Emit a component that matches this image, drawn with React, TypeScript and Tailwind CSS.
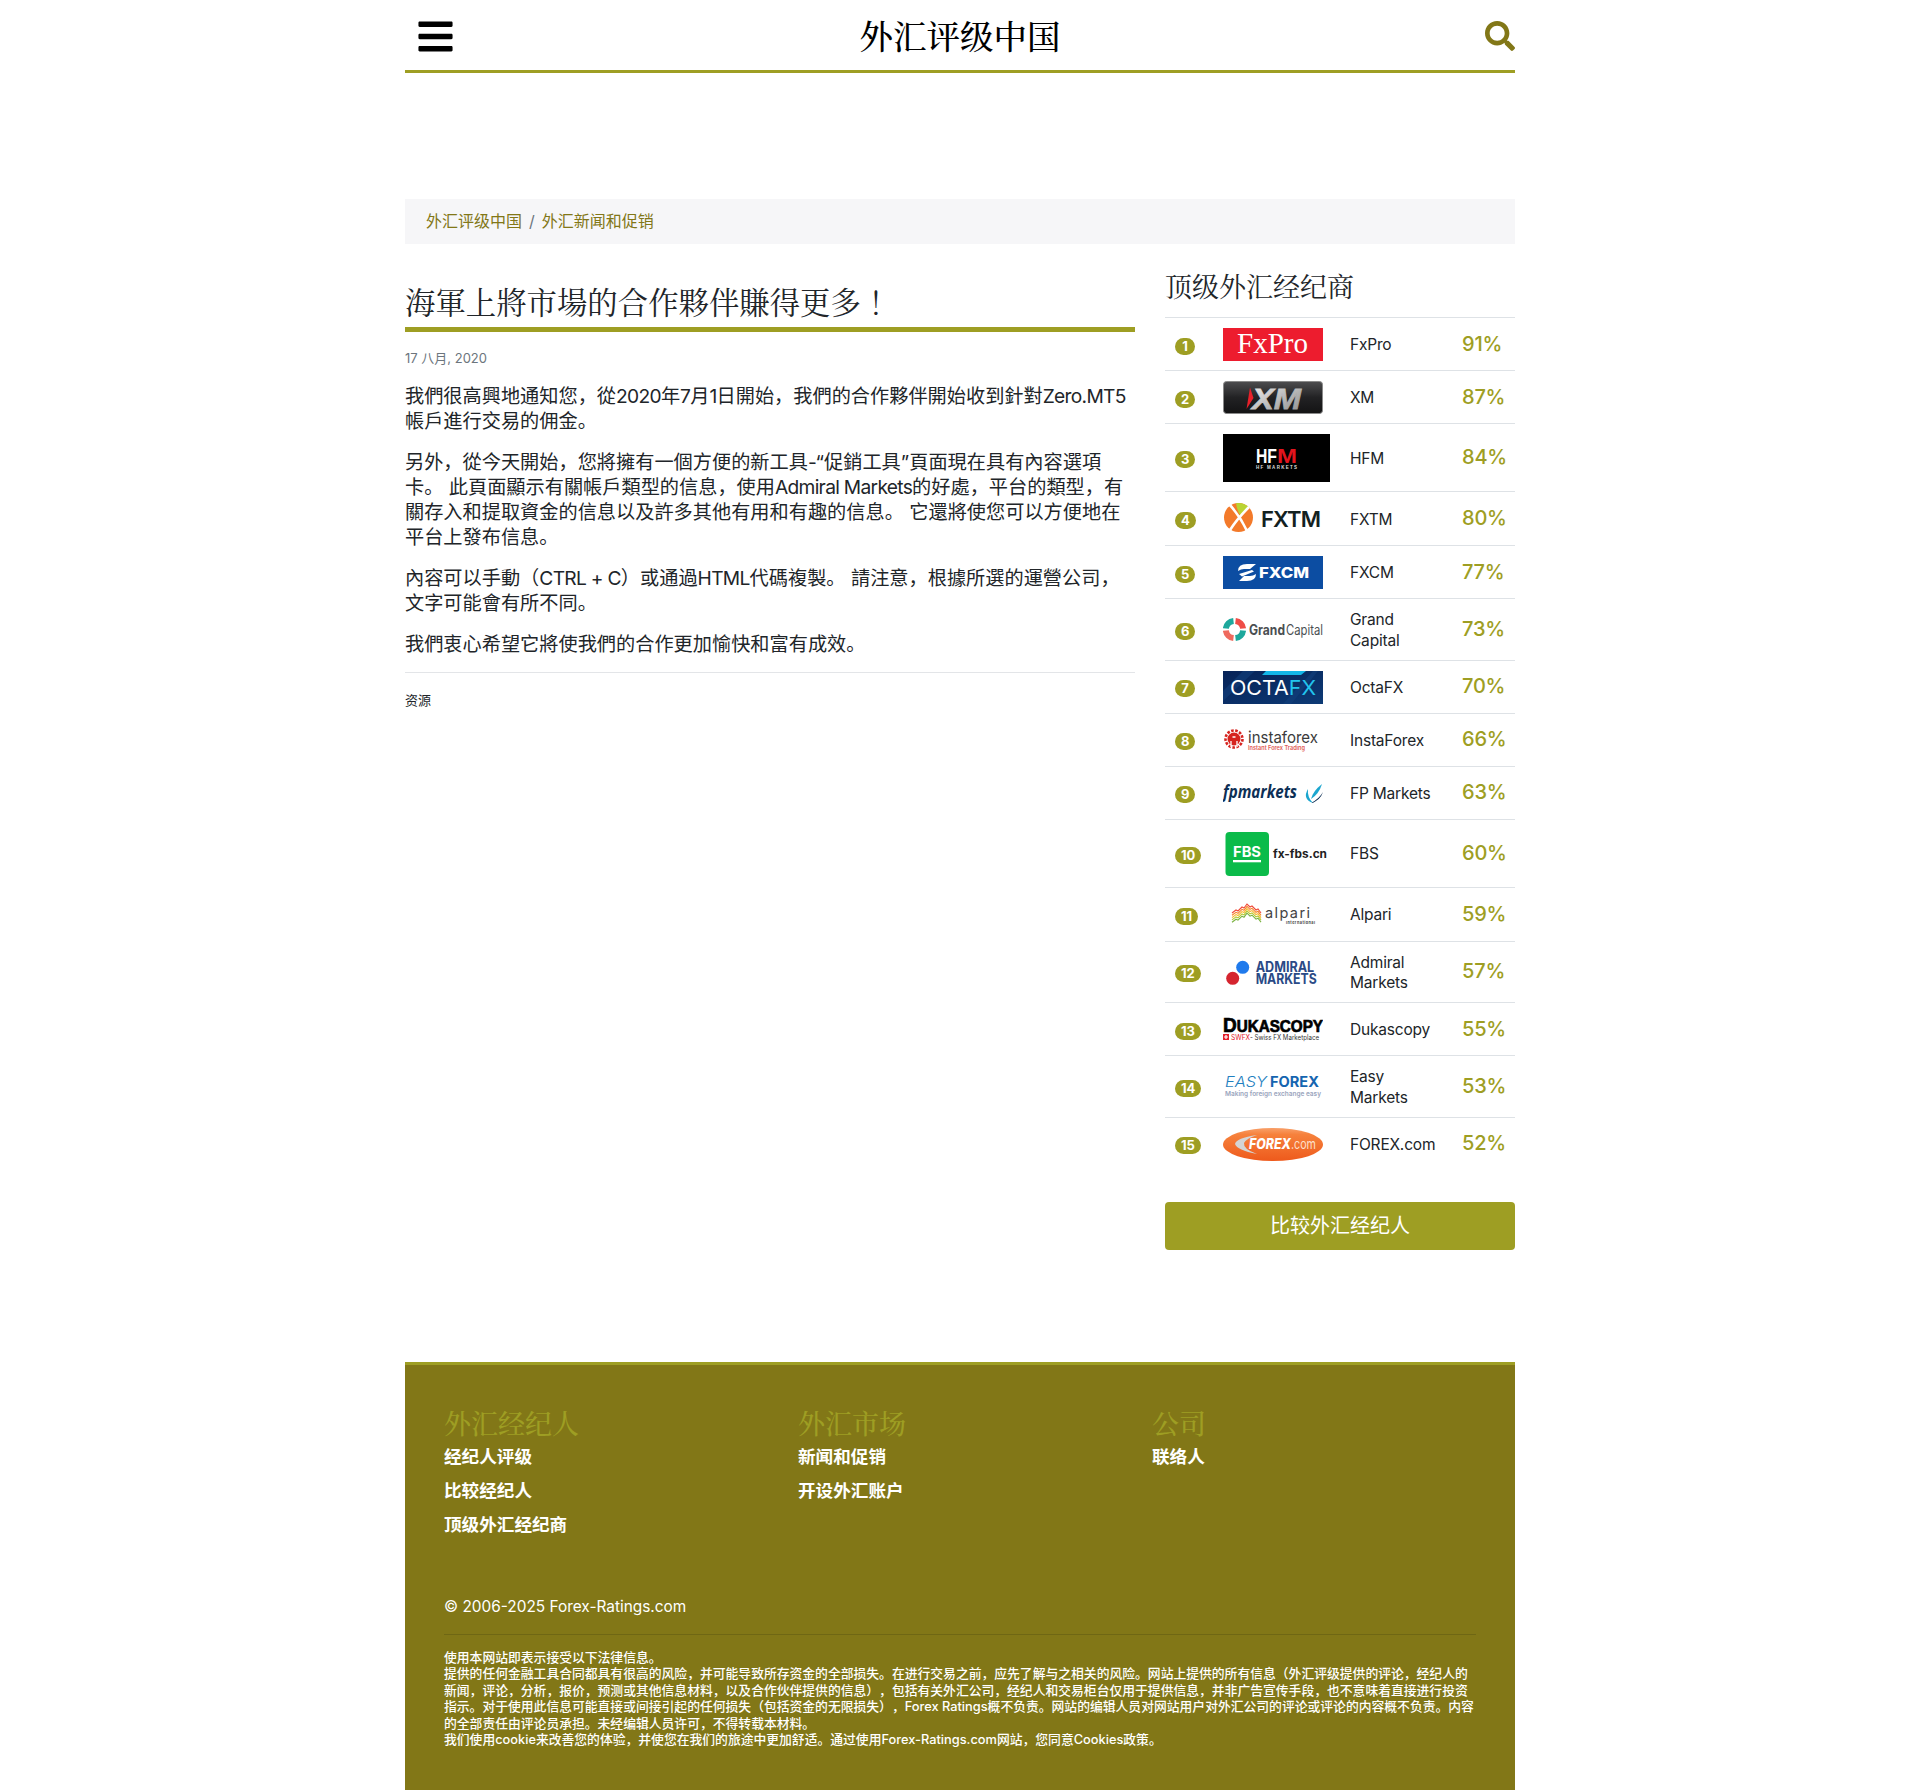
import React from "react";
import { FaBars, FaSearch } from "react-icons/fa";

const SC = "font-['Inter','Noto_Sans_CJK_SC',sans-serif]";
const ST = "font-['Noto_Serif_CJK_SC','Liberation_Serif','Noto_Sans_CJK_SC',serif]";
const TT = "font-['Noto_Serif_CJK_TC','Noto_Serif_CJK_SC','Liberation_Serif',serif]";

const inter = "Inter, sans-serif";
const arial = "'Liberation Sans', sans-serif";
const serif = "'Liberation Serif', serif";

function Svg({ w = 100, h = 33, children }: { w?: number; h?: number; children: React.ReactNode }) {
  return (
    <svg width={w} height={h} viewBox={`0 0 ${w} ${h}`} className="block">
      {children}
    </svg>
  );
}

function L({ children }: { children: React.ReactNode }) {
  return <span className="tracking-[-0.7px]">{children}</span>;
}

const FxPro = () => (
  <Svg>
    <rect width="100" height="33" fill="#ed1c2e" />
    <text x="14" y="25" fontFamily={serif} fontSize="29" fill="#fff" textLength="71" lengthAdjust="spacingAndGlyphs">FxPro</text>
  </Svg>
);
const XM = () => (
  <Svg>
    <defs>
      <linearGradient id="xmb" x1="0" y1="0" x2="0" y2="1">
        <stop offset="0" stopColor="#4d4d4f" />
        <stop offset="0.5" stopColor="#222224" />
        <stop offset="1" stopColor="#131314" />
      </linearGradient>
      <linearGradient id="xmt" x1="0" y1="0" x2="1" y2="1">
        <stop offset="0" stopColor="#f4f4f4" />
        <stop offset="1" stopColor="#8a8a8a" />
      </linearGradient>
    </defs>
    <rect x="0.5" y="0.5" width="99" height="32" rx="3" fill="url(#xmb)" stroke="#8a8a8a" />
    <path d="M27 6.5 L30.5 17 L23.5 28 Z" fill="#e8202a" />
    <text x="29" y="28" fontFamily={arial} fontWeight="700" fontStyle="italic" fontSize="30" fill="url(#xmt)" stroke="url(#xmt)" strokeWidth="0.8" textLength="49" lengthAdjust="spacingAndGlyphs">XM</text>
  </Svg>
);
const HFM = () => (
  <Svg w={107} h={48}>
    <rect width="107" height="48" fill="#000" />
    <text x="33" y="29" fontFamily={arial} fontWeight="700" fontSize="20" fill="#fff" textLength="21" lengthAdjust="spacingAndGlyphs">HF</text>
    <text x="54" y="29" fontFamily={arial} fontWeight="700" fontSize="20" fill="#e3141d" textLength="20" lengthAdjust="spacingAndGlyphs">M</text>
    <text x="33" y="35" fontFamily={arial} fontWeight="700" fontSize="4.5" fill="#ddd" textLength="41">HF MARKETS</text>
  </Svg>
);
const FXTM = () => (
  <Svg h={34}>
    <circle cx="15.5" cy="15.5" r="14.5" fill="#f37a2a" />
    <path d="M13 1.2 A14.5 14.5 0 0 1 26 5.5 L17 13 Q14 8 13 1.2 Z" fill="#b9d433" />
    <path d="M6 2 Q17 14 24 29 M26 5 Q14 17 7 28" stroke="#fff" strokeWidth="2.6" fill="none" />
    <text x="38" y="25" fontFamily={inter} fontWeight="600" fontSize="22" fill="#13211f" textLength="60">FXTM</text>
  </Svg>
);
const FXCM = () => (
  <Svg>
    <rect width="100" height="33" fill="#0c4da2" />
    <path d="M15 15 Q15 8 24 8 H33 L27 13 H21 Q18 13 15 15 Z" fill="#fff" />
    <path d="M33 18 Q33 25 24 25 H16 L21 20 H27 Q30 20 33 18 Z" fill="#fff" />
    <path d="M16 18 L29 14 L31 15.5 L19 20.5 Z" fill="#fff" />
    <text x="36" y="21.5" fontFamily={inter} fontWeight="800" fontSize="14.5" fill="#fff" textLength="50" lengthAdjust="spacingAndGlyphs">FXCM</text>
  </Svg>
);
const Grand = () => (
  <Svg>
    <g fill="none" strokeWidth="6">
      <path d="M2.9 15.5 A8.6 8.6 0 0 1 10.5 7.9" stroke="#1da89c" />
      <path d="M12.5 7.9 A8.6 8.6 0 0 1 20.1 15.5" stroke="#ef4d47" />
      <path d="M20.1 17.5 A8.6 8.6 0 0 1 12.5 25.1" stroke="#1da89c" />
      <path d="M10.5 25.1 A8.6 8.6 0 0 1 2.9 17.5" stroke="#ef6a5e" />
    </g>
    <text x="26" y="22" fontFamily={inter} fontSize="14" fontWeight="700" fill="#4a4f52" textLength="36" lengthAdjust="spacingAndGlyphs">Grand</text>
    <text x="63" y="22" fontFamily={inter} fontSize="14" fontWeight="400" fill="#4a4f52" textLength="37" lengthAdjust="spacingAndGlyphs">Capital</text>
  </Svg>
);
const Octa = () => (
  <Svg>
    <defs>
      <linearGradient id="oc" x1="0" y1="0" x2="1" y2="1">
        <stop offset="0" stopColor="#062257" />
        <stop offset="1" stopColor="#0d3a75" />
      </linearGradient>
    </defs>
    <rect width="100" height="33" fill="url(#oc)" />
    <path d="M0 20 L20 0 H32 L0 30 Z M60 33 L90 0 H95 L68 33 Z" fill="#123f7c" opacity="0.6" />
    <path d="M43 0 H83 L78 4 H39 Z" fill="#13b6e8" />
    <text x="7" y="24" fontFamily={inter} fontWeight="400" fontSize="20.5" fill="#fff" textLength="86" lengthAdjust="spacingAndGlyphs">
      OCTA<tspan fill="#22c4ee">FX</tspan>
    </text>
  </Svg>
);
const Insta = () => (
  <Svg>
    <circle cx="11" cy="15" r="8.5" fill="none" stroke="#d6241f" strokeWidth="2.6" strokeDasharray="2.6 1.5" />
    <circle cx="11" cy="15" r="6.5" fill="#d6241f" />
    <path d="M8 23 V17 M14 23 V17 M9.5 13 H12.5" stroke="#fff" strokeWidth="1.3" fill="none" />
    <text x="25" y="18.5" fontFamily={inter} fontSize="16.5" fill="#3b3b3b" textLength="70" lengthAdjust="spacingAndGlyphs">instaforex</text>
    <text x="25" y="25.5" fontFamily={inter} fontSize="6" fontWeight="600" fill="#e05a55" textLength="57" lengthAdjust="spacingAndGlyphs">Instant Forex Trading</text>
  </Svg>
);
const Fp = () => (
  <Svg>
    <text x="0" y="21" fontFamily="'Open Sans', sans-serif" fontWeight="700" fontStyle="italic" fontSize="18" fill="#0d2f55" textLength="74" lengthAdjust="spacingAndGlyphs">fpmarkets</text>
    <path d="M85 12 Q79 22 90 26 Q84 20 85 12 Z" fill="#1ba6cf" />
    <path d="M99 7 Q96 17 88 22 Q90 14 99 7 Z" fill="#1ba6cf" />
    <path d="M100 15 Q97 24 88 26 Q96 22 100 15 Z" fill="#0d2f55" />
  </Svg>
);
const FBS = () => (
  <Svg w={107} h={48}>
    <rect x="2.5" y="2" width="43.5" height="44" rx="4" fill="#0bbb4a" />
    <text x="10" y="27" fontFamily={inter} fontWeight="700" fontSize="14" fill="#fff" textLength="28" lengthAdjust="spacingAndGlyphs">FBS</text>
    <rect x="10" y="30" width="28" height="2.3" fill="#fff" />
    <text x="50" y="28" fontFamily={inter} fontWeight="700" fontSize="11.5" fill="#222" textLength="54" lengthAdjust="spacingAndGlyphs">fx-fbs.cn</text>
  </Svg>
);
const zig = "M9 15 L13 12 L15 13 L19 9 L21 10 L24 6 L27 9 L29 8 L33 12 L35 11 L38 15";
const Alpari = () => (
  <Svg h={34}>
    <g fill="none" strokeWidth="1.1">
      <path d={zig} stroke="#ef4b3a" />
      <path d={zig} stroke="#f5852b" transform="translate(0 2.3)" />
      <path d={zig} stroke="#f7b52b" transform="translate(0 4.6)" />
      <path d={zig} stroke="#b7c92f" transform="translate(0 6.9)" />
      <path d={zig} stroke="#7cb342" transform="translate(0 9.2)" />
    </g>
    <text x="42" y="20" fontFamily={inter} fontSize="14.5" fill="#444" textLength="45">alpari</text>
    <text x="63" y="26" fontFamily={inter} fontSize="3.8" fontWeight="700" fill="#444" textLength="29">International</text>
  </Svg>
);
const Admiral = () => (
  <Svg>
    <circle cx="19.7" cy="11.3" r="6.5" fill="#1f7aec" />
    <circle cx="9.7" cy="22.3" r="6.5" fill="#d5252f" />
    <text x="32.7" y="15.5" fontFamily={inter} fontWeight="700" fontSize="14" fill="#2a4a86" textLength="58.5" lengthAdjust="spacingAndGlyphs">ADMIRAL</text>
    <text x="32.7" y="28" fontFamily={inter} fontWeight="700" fontSize="14" fill="#2a4a86" textLength="61" lengthAdjust="spacingAndGlyphs">MARKETS</text>
  </Svg>
);
const Duka = () => (
  <Svg>
    <text x="0" y="19" fontFamily={arial} fontWeight="700" fontSize="20" fill="#000" stroke="#000" strokeWidth="0.7" textLength="100" lengthAdjust="spacingAndGlyphs">
      D<tspan fontSize="16">UKASCOPY</tspan>
    </text>
    <rect x="0" y="21" width="6" height="6" fill="#e3202a" />
    <path d="M3 22 V26 M1 24 H5" stroke="#fff" strokeWidth="1.2" />
    <text x="8" y="27" fontFamily={inter} fontSize="7" fill="#e3202a" textLength="19" lengthAdjust="spacingAndGlyphs">SWFX</text>
    <text x="27" y="27" fontFamily={inter} fontSize="7" fill="#333" textLength="69" lengthAdjust="spacingAndGlyphs">- Swiss FX Marketplace</text>
  </Svg>
);
const Easy = () => (
  <Svg>
    <text x="2" y="17" fontFamily={inter} fontStyle="italic" fontWeight="300" fontSize="14" fill="#1f7fc0" textLength="42" lengthAdjust="spacingAndGlyphs">EASY</text>
    <text x="47" y="17" fontFamily={inter} fontWeight="700" fontSize="14" fill="#1565b0" textLength="49" lengthAdjust="spacingAndGlyphs">FOREX</text>
    <text x="2" y="26" fontFamily={inter} fontWeight="600" fontSize="6.8" fill="#9aa5bd" textLength="96" lengthAdjust="spacingAndGlyphs">Making foreign exchange easy</text>
  </Svg>
);
const ForexCom = () => (
  <Svg>
    <defs>
      <linearGradient id="fc" x1="0" y1="0" x2="0" y2="1">
        <stop offset="0" stopColor="#f8a06a" />
        <stop offset="0.2" stopColor="#f6813c" />
        <stop offset="1" stopColor="#ee5a1c" />
      </linearGradient>
    </defs>
    <ellipse cx="50" cy="16.5" rx="50" ry="16.5" fill="url(#fc)" />
    <path d="M34 7 Q13 10 12 16 Q14 22 34 26 Q20 21 21 15 Q24 10 34 7 Z" fill="#d4d4d4" />
    <text x="26" y="21" fontFamily={inter} fontWeight="800" fontStyle="italic" fontSize="14" fill="#fff" textLength="42" lengthAdjust="spacingAndGlyphs">FOREX</text>
    <text x="68" y="21" fontFamily={inter} fontWeight="400" fontSize="14" fill="#fde0cc" textLength="25" lengthAdjust="spacingAndGlyphs">.com</text>
  </Svg>
);

const rows: [string, string, React.ComponentType][] = [
  ["FxPro", "91%", FxPro],
  ["XM", "87%", XM],
  ["HFM", "84%", HFM],
  ["FXTM", "80%", FXTM],
  ["FXCM", "77%", FXCM],
  ["Grand Capital", "73%", Grand],
  ["OctaFX", "70%", Octa],
  ["InstaForex", "66%", Insta],
  ["FP Markets", "63%", Fp],
  ["FBS", "60%", FBS],
  ["Alpari", "59%", Alpari],
  ["Admiral Markets", "57%", Admiral],
  ["Dukascopy", "55%", Duka],
  ["Easy Markets", "53%", Easy],
  ["FOREX.com", "52%", ForexCom],
];

function BrokerRow({ n, name, pct, Logo }: { n: number; name: string; pct: string; Logo: React.ComponentType }) {
  return (
    <div className="flex items-center border-t border-[#dee2e6] pt-[10px] pb-[9px]">
      <div className="w-[58px] pl-[10px] shrink-0">
        <span className="inline-block min-w-[20px] rounded-full bg-[#9e9e23] px-[6px] text-center text-[13px] font-bold leading-[17px] text-white">{n}</span>
      </div>
      <div className="w-[127px] shrink-0"><Logo /></div>
      <div className="w-[112px] shrink-0 translate-y-[1px] pr-[20px] text-[15.5px] leading-[20.8px] tracking-[-0.2px] text-[#212529]">{name}</div>
      <div className="-translate-y-[1px] text-[20px] font-medium leading-[24px] tracking-[-0.2px] text-[#9e9e23]">{pct}</div>
    </div>
  );
}

const foot = [
  ["外汇经纪人", ["经纪人评级", "比较经纪人", "顶级外汇经纪商"]],
  ["外汇市场", ["新闻和促销", "开设外汇账户"]],
  ["公司", ["联络人"]],
] as const;

export default function App() {
  return (
    <div className={`mx-auto w-[1110px] ${SC} text-[#212529] [text-spacing-trim:space-all]`}>
      <header className="grid h-[73px] grid-cols-[1fr_auto_1fr] items-center border-b-[3px] border-[#9e9e23]">
        <FaBars className="ml-[11px] mt-[2px] text-[39px] text-black" />
        <div className={`${ST} text-[33.5px] font-medium leading-none text-black`}>外汇评级中国</div>
        <FaSearch className="mt-[1px] justify-self-end text-[30px] text-[#827717]" />
      </header>

      <nav className="mt-[126px] flex h-[45px] items-center gap-[7px] bg-[#f6f6f8] pb-[2px] pl-[21px] text-[16px] text-[#827717]">
        <span>外汇评级中国</span>
        <span className="text-[#6c757d]">/</span>
        <span>外汇新闻和促销</span>
      </nav>

      <div className="mt-[24px] flex gap-[30px]">
        <article className="w-[730px] shrink-0">
          <h1 className={`${TT} mt-[11px] border-b-[5px] border-[#9e9e23] pb-[4px] text-[30.4px] font-normal leading-[44px] text-[#212529]`}>海軍上將市場的合作夥伴賺得更多！</h1>
          <div className="mt-[17px] text-[13px] leading-[18px] text-[#6c757d]">17 八月, 2020</div>
          <div className="mt-[17px] text-[19.2px] leading-[25px]">
            <p>我們很高興地通知您，從<L>2020</L>年<L>7</L>月<L>1</L>日開始，我們的合作夥伴開始收到針對<L>Zero.MT5</L>帳戶進行交易的佣金。</p>
            <p className="mt-[16px]">另外，從今天開始，您將擁有一個方便的新工具-“促銷工具”頁面現在具有內容選項卡。 此頁面顯示有關帳戶類型的信息，使用<L>Admiral Markets</L>的好處，平台的類型，有關存入和提取資金的信息以及許多其他有用和有趣的信息。 它還將使您可以方便地在平台上發布信息。</p>
            <p className="mt-[16px]">內容可以手動（<L>CTRL + C</L>）或通過<L>HTML</L>代碼複製。 請注意，根據所選的運營公司，文字可能會有所不同。</p>
            <p className="mt-[16px]">我們衷心希望它將使我們的合作更加愉快和富有成效。</p>
          </div>
          <div className="mt-[15px] border-t border-[#e3e5e8] pt-[18px] text-[13px] leading-[18px] text-[#212529]">资源</div>
        </article>

        <aside className="w-[350px] shrink-0">
          <h2 className={`${ST} -mt-[1px] pb-[12px] text-[27px] font-normal leading-[38px] text-[#212529]`}>顶级外汇经纪商</h2>
          <div>
            {rows.map(([name, pct, Logo], i) => (
              <BrokerRow key={name} n={i + 1} name={name} pct={pct} Logo={Logo} />
            ))}
          </div>
          <button className="mt-[32px] block h-[48px] w-full rounded-[4px] bg-[#9e9e23] text-[20px] text-white">比较外汇经纪人</button>
        </aside>
      </div>

      <footer className="mt-[112px] h-[428px] border-t-[3px] border-[#9e9e23] bg-[#827717] px-[39px] pt-[38px] text-white">
        <div className="flex">
          {foot.map(([title, links]) => (
            <div key={title} className="w-[354px] shrink-0">
              <div className={`${ST} text-[27px] font-medium leading-[40px] text-[#9e9e23]`}>{title}</div>
              <ul className="mt-[1px] flex flex-col gap-[8px] text-[17.6px] font-bold leading-[26px]">
                {links.map((l) => (
                  <li key={l}>{l}</li>
                ))}
              </ul>
            </div>
          ))}
        </div>
        <div className="pt-[57px] text-[15.4px] leading-[24px]">© 2006-2025 Forex-Ratings.com</div>
        <div className="mt-[15px] border-t border-[#6f6714] pt-[15px] text-[12.8px] font-medium leading-[16.5px]">
          <p>使用本网站即表示接受以下法律信息。</p>
          <p>提供的任何金融工具合同都具有很高的风险，并可能导致所存资金的全部损失。在进行交易之前，应先了解与之相关的风险。网站上提供的所有信息（外汇评级提供的评论，经纪人的新闻，评论，分析，报价，预测或其他信息材料，以及合作伙伴提供的信息），包括有关外汇公司，经纪人和交易柜台仅用于提供信息，并非广告宣传手段，也不意味着直接进行投资指示。对于使用此信息可能直接或间接引起的任何损失（包括资金的无限损失），Forex Ratings概不负责。网站的编辑人员对网站用户对外汇公司的评论或评论的内容概不负责。内容的全部责任由评论员承担。未经编辑人员许可，不得转载本材料。</p>
          <p>我们使用cookie来改善您的体验，并使您在我们的旅途中更加舒适。通过使用Forex-Ratings.com网站，您同意Cookies政策。</p>
        </div>
      </footer>
    </div>
  );
}
